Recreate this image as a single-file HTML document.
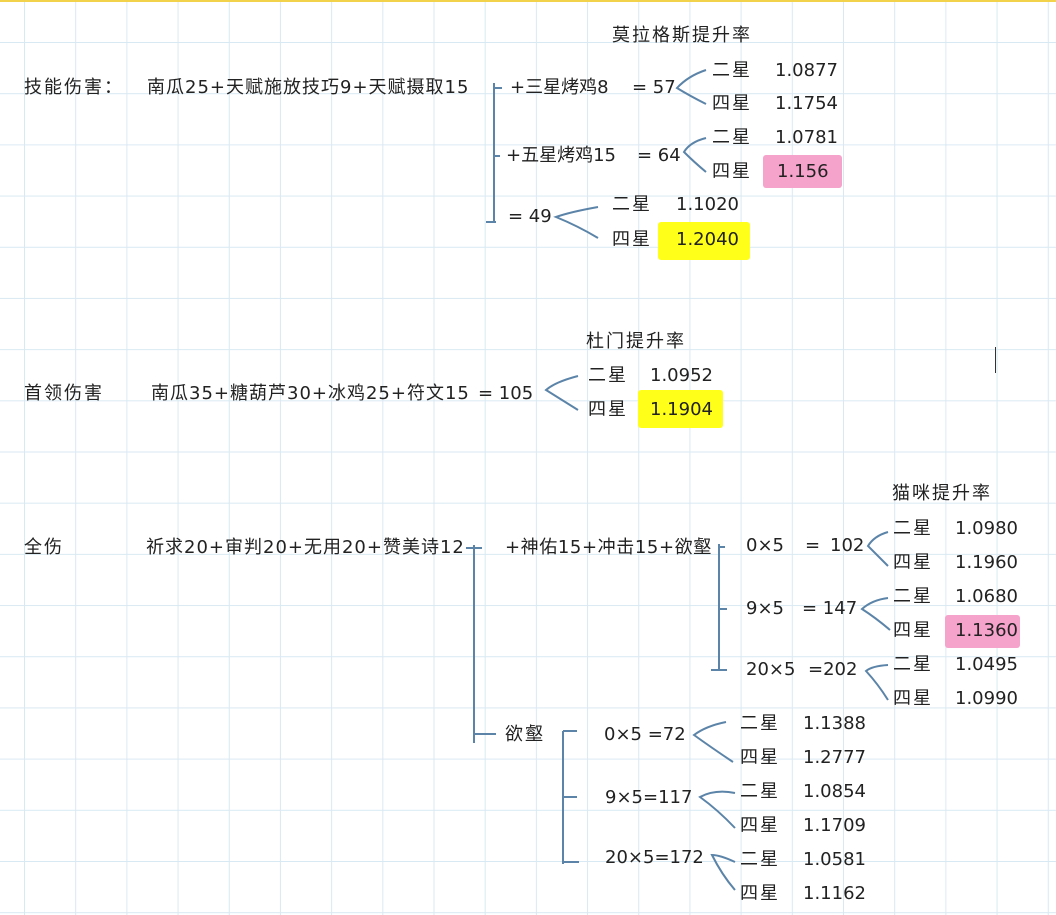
<!DOCTYPE html>
<html><head><meta charset="utf-8"><style>
html,body{margin:0;padding:0}
body{width:1056px;height:915px;position:relative;overflow:hidden;background-color:#fff;
background-image:linear-gradient(to right,#d9e9f3 1px,transparent 1px),linear-gradient(to bottom,#d9e9f3 1px,transparent 1px);
background-size:51.2px 51.2px;background-position:24px 42px;
font-family:"DejaVu Sans","Noto Sans CJK SC",sans-serif;font-size:18px;color:#222}
.t{position:absolute;line-height:24px;white-space:nowrap}
.c{letter-spacing:2px}
.m{letter-spacing:1px}
.hl{position:absolute;border-radius:3px}
#top{position:absolute;left:0;top:0;width:1056px;height:2px;background:#f2d24a}
svg{position:absolute;left:0;top:0}
</style></head><body>
<div id="top"></div>
<div class="hl" style="left:763px;top:155px;width:79px;height:33px;background:#f5a3cb"></div>
<div class="hl" style="left:658px;top:222px;width:92px;height:38px;background:#ffff1a"></div>
<div class="hl" style="left:638px;top:390px;width:85px;height:38px;background:#ffff1a"></div>
<div class="hl" style="left:945px;top:615px;width:75px;height:33px;background:#f5a3cb"></div>
<svg width="1056" height="915" fill="none" stroke="#5b84a8" stroke-width="2">
<path d="M494 83V222M494 88h8M494 156h6M486 222h10"/>
<path d="M706 70Q688 76 677 88Q690 96 706 104"/>
<path d="M706 138Q690 142 684 152Q694 162 706 172"/>
<path d="M598 207Q570 212 556 217Q578 226 598 238"/>
<path d="M578 376Q555 382 546 390Q562 400 578 410"/>
<path d="M474 545V743M466 548h16M474 734h22"/>
<path d="M719 544V670M719 547h6M719 609h8M711 670h16"/>
<path d="M888 532Q874 536 868 546Q878 556 888 566"/>
<path d="M888 598Q872 600 862 609Q876 618 890 630"/>
<path d="M888 665Q872 666 866 671Q878 684 888 700"/>
<path d="M563 731V864M563 731h14M563 797h14M563 862h16"/>
<path d="M726 722Q706 726 694 735Q712 748 733 762"/>
<path d="M735 793Q715 789 700 797Q718 810 735 828"/>
<path d="M735 862Q720 855 712 855Q722 875 735 890"/>
</svg>
<div class="t c" style="left:24px;top:76px">技能伤害：</div>
<div class="t m" style="left:147px;top:76px">南瓜25+天赋施放技巧9+天赋摄取15</div>
<div class="t c" style="left:612px;top:24px">莫拉格斯提升率</div>
<div class="t" style="left:510px;top:76px">+三星烤鸡8</div>
<div class="t" style="left:632px;top:76px">= 57</div>
<div class="t c" style="left:712px;top:59px">二星</div><div class="t" style="left:775px;top:59px">1.0877</div>
<div class="t c" style="left:712px;top:92px">四星</div><div class="t" style="left:775px;top:92px">1.1754</div>
<div class="t c" style="left:712px;top:126px">二星</div><div class="t" style="left:775px;top:126px">1.0781</div>
<div class="t" style="left:506px;top:144px">+五星烤鸡15</div>
<div class="t" style="left:637px;top:144px">= 64</div>
<div class="t c" style="left:712px;top:160px">四星</div><div class="t" style="left:777px;top:160px">1.156</div>
<div class="t" style="left:508px;top:205px">= 49</div>
<div class="t c" style="left:612px;top:193px">二星</div><div class="t" style="left:676px;top:193px">1.1020</div>
<div class="t c" style="left:612px;top:228px">四星</div><div class="t" style="left:676px;top:228px">1.2040</div>
<div class="t c" style="left:586px;top:330px">杜门提升率</div>
<div class="t c" style="left:24px;top:382px">首领伤害</div>
<div class="t m" style="left:151px;top:382px">南瓜35+糖葫芦30+冰鸡25+符文15</div>
<div class="t" style="left:478px;top:382px">= 105</div>
<div class="t c" style="left:588px;top:364px">二星</div><div class="t" style="left:650px;top:364px">1.0952</div>
<div class="t c" style="left:588px;top:398px">四星</div><div class="t" style="left:650px;top:398px">1.1904</div>
<div class="t c" style="left:892px;top:482px">猫咪提升率</div>
<div class="t c" style="left:24px;top:536px">全伤</div>
<div class="t m" style="left:146px;top:536px">祈求20+审判20+无用20+赞美诗12</div>
<div class="t" style="left:505px;top:536px;letter-spacing:.6px">+神佑15+冲击15+欲壑</div>
<div class="t" style="left:746px;top:534px">0×5</div><div class="t" style="left:805px;top:534px">=</div><div class="t" style="left:830px;top:534px">102</div>
<div class="t c" style="left:893px;top:517px">二星</div><div class="t" style="left:955px;top:517px">1.0980</div>
<div class="t c" style="left:893px;top:551px">四星</div><div class="t" style="left:955px;top:551px">1.1960</div>
<div class="t" style="left:746px;top:597px">9×5</div><div class="t" style="left:802px;top:597px">= 147</div>
<div class="t c" style="left:893px;top:585px">二星</div><div class="t" style="left:955px;top:585px">1.0680</div>
<div class="t c" style="left:893px;top:619px">四星</div><div class="t" style="left:955px;top:619px">1.1360</div>
<div class="t" style="left:746px;top:658px">20×5</div><div class="t" style="left:808px;top:658px">=202</div>
<div class="t c" style="left:893px;top:653px">二星</div><div class="t" style="left:955px;top:653px">1.0495</div>
<div class="t c" style="left:893px;top:687px">四星</div><div class="t" style="left:955px;top:687px">1.0990</div>
<div class="t c" style="left:505px;top:723px">欲壑</div>
<div class="t" style="left:604px;top:723px">0×5 =72</div>
<div class="t c" style="left:740px;top:712px">二星</div><div class="t" style="left:803px;top:712px">1.1388</div>
<div class="t c" style="left:740px;top:746px">四星</div><div class="t" style="left:803px;top:746px">1.2777</div>
<div class="t" style="left:605px;top:786px">9×5=117</div>
<div class="t c" style="left:740px;top:780px">二星</div><div class="t" style="left:803px;top:780px">1.0854</div>
<div class="t c" style="left:740px;top:814px">四星</div><div class="t" style="left:803px;top:814px">1.1709</div>
<div class="t" style="left:605px;top:846px">20×5=172</div>
<div class="t c" style="left:740px;top:848px">二星</div><div class="t" style="left:803px;top:848px">1.0581</div>
<div class="t c" style="left:740px;top:882px">四星</div><div class="t" style="left:803px;top:882px">1.1162</div>
<div style="position:absolute;left:995px;top:347px;width:1px;height:26px;background:#333"></div>
</body></html>
